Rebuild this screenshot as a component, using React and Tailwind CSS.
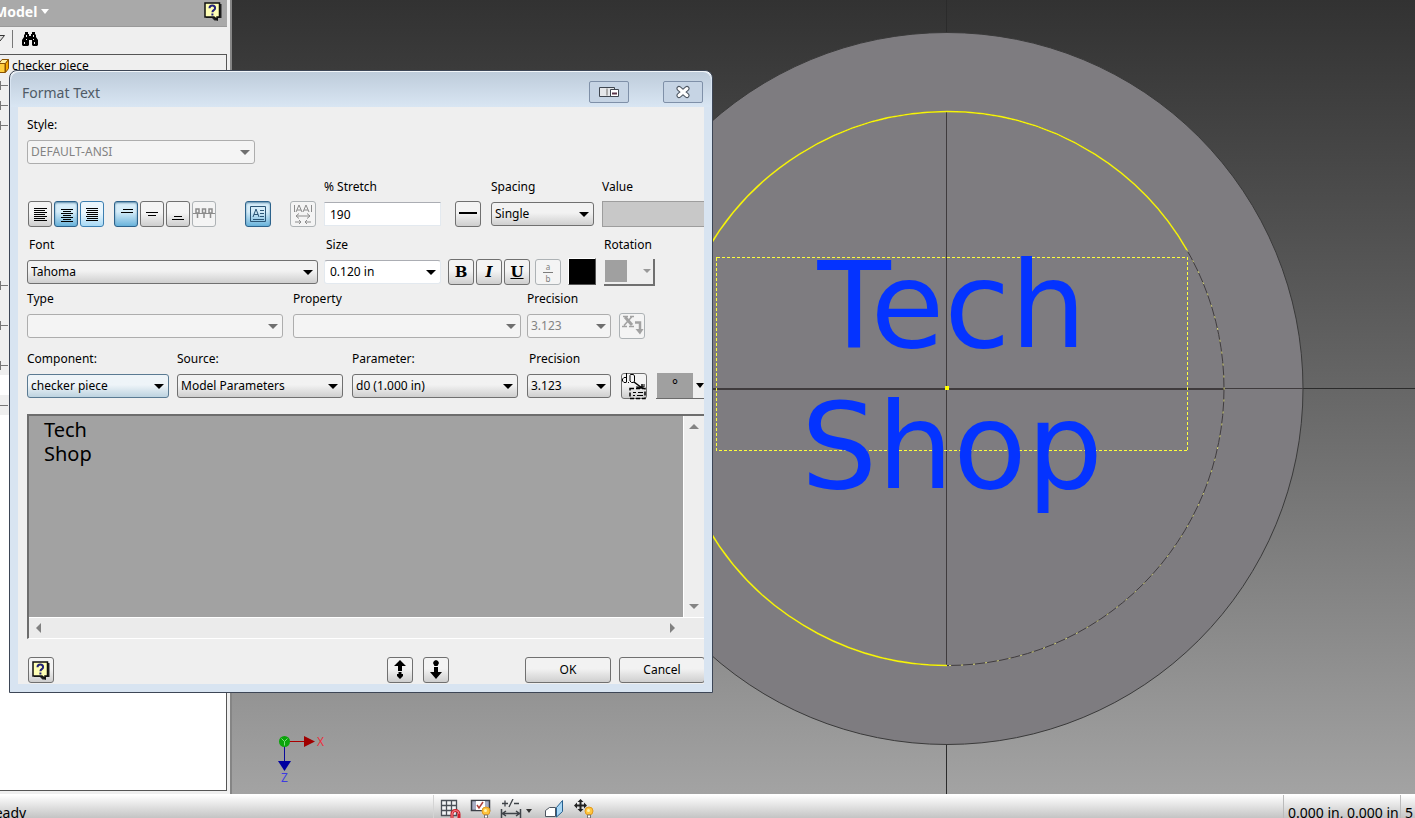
import { useState } from "react";

const UI_FONT = "font-['Noto_Sans',Tahoma,sans-serif]";

function Caret({ className = "text-black" }) {
  return (
    <svg className={className} width="10" height="5" viewBox="0 0 10 5" aria-hidden="true">
      <path d="M0 0h10L5 5z" fill="currentColor" />
    </svg>
  );
}

function HelpIcon() {
  return (
    <svg width="18" height="19" viewBox="0 0 18 19" aria-hidden="true">
      <path d="M2 2h15.500v14H14v2.500h-3.500L8 16H2z" fill="#222" />
      <path d="M1 1h14.500v14H13v2.500L10 15H1z" fill="#ffffb5" stroke="#111" strokeWidth="1.500" />
      <path d="M5.500 6.200c0-3.600 5.600-3.600 5.600 0 0 2-2.700 1.800-2.700 4M8.400 11.500v2" fill="none" stroke="#23237a" strokeWidth="2" />
    </svg>
  );
}

function Field({ id, label, inset, className = "", children }) {
  return (
    <div className={`flex flex-col gap-[5px] ${className}`}>
      <label htmlFor={id} className={`h-[18px] leading-[18px] whitespace-nowrap ${inset ? "pl-[2px]" : ""}`}>
        {label}
      </label>
      <div className="flex h-[26px] items-center">{children}</div>
    </div>
  );
}

const selectTones = {
  normal: "border-[#707070] bg-linear-to-b from-[#f2f2f2] from-45% to-[#cfcfcf] text-black",
  hot: "border-[#5a7a92] bg-linear-to-b from-[#eef4f8] from-45% to-[#bdd3e0] text-black",
  disabled: "border-[#adadad] bg-[#f4f4f4] text-[#838383]",
  plain: "border-[#e3e9ef] border-t-[#abadb3] bg-white text-black",
};

function Select({ id, tone = "normal", options }) {
  return (
    <div className="relative w-full">
      <select
        id={id}
        disabled={tone === "disabled"}
        className={`block h-6 w-full appearance-none rounded-[3px] border pr-5 leading-5 opacity-100 ${tone === "plain" ? "pl-[5px]" : "pl-[3px]"} ${selectTones[tone]}`}
      >
        {options.map((option) => (
          <option key={option}>{option}</option>
        ))}
      </select>
      <span className="pointer-events-none absolute inset-y-0 right-[5px] flex items-center">
        <Caret className={tone === "disabled" ? "text-[#6f6f6f]" : "text-black"} />
      </span>
    </div>
  );
}

const toolTones = {
  normal: "border-[#707070] bg-linear-to-b from-[#f4f4f4] from-45% to-[#cecece]",
  active: "border-[#2c628b] bg-linear-to-b from-[#d6edf9] from-40% to-[#68b3db] shadow-[inset_0_1px_2px_#5d8ba8]",
  hot: "border-[#3c7fb1] bg-linear-to-b from-[#eaf6fd] from-45% to-[#a7d9f5]",
  disabled: "border-[#adb2b5] bg-[#f4f4f4]",
};

function ToolButton({ label, tone = "normal", narrow, onClick, children }) {
  return (
    <button
      type="button"
      aria-label={label}
      disabled={tone === "disabled"}
      onClick={onClick}
      className={`flex h-[26px] shrink-0 items-center justify-center rounded-[3px] border ${narrow ? "w-6" : "w-[26px]"} ${toolTones[tone]}`}
    >
      {children}
    </button>
  );
}

function Strokes({ d, color = "#000", width = 1 }) {
  return (
    <svg width="22" height="24" viewBox="0 0 22 24" className="shrink-0" aria-hidden="true" shapeRendering="crispEdges">
      <path d={d} fill="none" stroke={color} strokeWidth={width} />
    </svg>
  );
}

const horizontal = [
  { label: "Left justify", d: "M5 6.500h13M5 8.500h11M5 10.500h13M5 12.500h11M5 14.500h13M5 16.500h11M5 18.500h13" },
  { label: "Center justify", d: "M6 7.500h12M8 9.500h8M6 11.500h12M8 13.500h8M6 15.500h12M8 17.500h8M6 19.500h12" },
  { label: "Right justify", d: "M5 6.500h12M6 8.500h11M5 10.500h12M6 12.500h11M5 14.500h12M6 16.500h11M5 18.500h12" },
];

const vertical = [
  { label: "Top justify", d: "M8 7.500h10M6 10.500h12" },
  { label: "Middle justify", d: "M5 10.500h12M7 13.500h8" },
  { label: "Bottom justify", d: "M7 14.500h8M5 17.500h12" },
];

function FormatBar() {
  const [align, setAlign] = useState(1);
  const [base, setBase] = useState(0);

  return (
    <div className="mt-[13px] flex items-end">
      <div className="ml-px flex gap-[2px]">
        {horizontal.map((item, i) => (
          <ToolButton key={item.label} narrow label={item.label} tone={align === i ? "active" : i === 2 ? "hot" : "normal"} onClick={() => setAlign(i)}>
            <Strokes d={item.d} />
          </ToolButton>
        ))}
      </div>
      <div className="ml-[10px] flex gap-[2px]">
        {vertical.map((item, i) => (
          <ToolButton key={item.label} narrow label={item.label} tone={base === i ? "active" : "normal"} onClick={() => setBase(i)}>
            <Strokes d={item.d} />
          </ToolButton>
        ))}
        <ToolButton narrow label="Baseline justify" tone="disabled">
          <svg width="22" height="24" viewBox="0 0 22 24" fill="none" stroke="#8c8c8c" aria-hidden="true">
            <path d="M0 11.500h22" />
            <path d="M3 7h3v4H3zM9.500 7h3v4h-3zM16 7h3v4h-3zM4.500 11v5M11 11v5M17.500 11v5" strokeWidth="1.500" />
          </svg>
        </ToolButton>
      </div>
      <div className="ml-[29px]">
        <ToolButton label="Single line text" tone="active">
          <svg width="18" height="18" viewBox="0 0 18 18" fill="none" stroke="#2b5575" aria-hidden="true">
            <path d="M1.500 1.500h15v15h-15zM4 12l3-8 3 8M5 9.500h4M11 5.500h4M11 8.500h4M11 11.500h4M4 14.500h11" />
          </svg>
        </ToolButton>
      </div>
      <div className="ml-[19px]">
        <ToolButton label="Fit text" tone="disabled">
          <svg width="24" height="24" viewBox="0 0 24 24" fill="none" stroke="#8c8c8c" aria-hidden="true">
            <path d="M3.500 3v7M20.500 3v7M5 10l3-7 3 7M6 8h4M12 10l3-7 3 7M13 8h4M5 14h14M8 11.500L5 14l3 2.500M16 11.500l3 2.500-3 2.500M4 20h6M8 18l2 2-2 2M20 20h-6M16 18l-2 2 2 2" />
          </svg>
        </ToolButton>
      </div>
      <Field id="stretch" label="% Stretch" className="ml-2 w-[117px]">
        <input id="stretch" defaultValue="190" className="h-6 w-full border border-[#e3e9ef] border-t-[#abadb3] bg-white pl-[5px]" />
      </Field>
      <div className="ml-[14px]">
        <ToolButton label="Line style">
          <Strokes d="M2 11h18" width={2} />
        </ToolButton>
      </div>
      <Field id="spacing" label="Spacing" className="ml-[10px] w-[103px]">
        <Select id="spacing" options={["Single", "Double", "Multiple"]} />
      </Field>
      <Field id="value" label="Value" className="ml-[8px] min-w-0 flex-1">
        <input id="value" disabled className="h-[26px] w-full border border-r-0 border-[#9d9d9d] bg-[#c8c8c8]" />
      </Field>
    </div>
  );
}

function FontBar() {
  const letter = "font-['DejaVu_Serif',serif] text-[15px] leading-5 font-bold";
  return (
    <div className="mt-[9px] flex items-end">
      <Field id="font" label="Font" inset className="w-[291px]">
        <Select id="font" options={["Tahoma", "Arial"]} />
      </Field>
      <Field id="size" label="Size" inset className="ml-[6px] w-[117px]">
        <Select id="size" tone="plain" options={["0.120 in", "0.240 in"]} />
      </Field>
      <div className="ml-[7px] flex gap-[2px]">
        <ToolButton label="Bold"><b className={letter}>B</b></ToolButton>
        <ToolButton label="Italic"><i className={letter}>I</i></ToolButton>
        <ToolButton label="Underline"><u className={letter}>U</u></ToolButton>
      </div>
      <div className="ml-[5px]">
        <ToolButton label="Stack" tone="disabled">
          <span className="flex flex-col text-[8px] leading-[11px] text-[#7c7c7c]">
            <span className="border-b border-[#7c7c7c] px-[3px]">a</span>
            <span className="px-[3px]">b</span>
          </span>
        </ToolButton>
      </div>
      <button type="button" aria-label="Text color" className="ml-[7px] h-[27px] w-7 border border-t-white border-r-[#555] border-b-[#555] border-l-white bg-black" />
      <Field id="rotation" label="Rotation" className="ml-[8px]">
        <button id="rotation" type="button" disabled className="flex h-[27px] w-[51px] items-center justify-between border-r-2 border-b-2 border-[#707070] bg-[#efefef] pr-[2px]">
          <span className="ml-px h-[22px] w-[22px] bg-[#a0a0a0]" />
          <svg width="8" height="4" viewBox="0 0 8 4" aria-hidden="true"><path d="M0 0h8L4 4z" fill="#999" /></svg>
        </button>
      </Field>
    </div>
  );
}

function PropertyBar() {
  return (
    <div className="mt-[5px] flex items-end">
      <Field id="type" label="Type" className="w-[256px]">
        <Select id="type" tone="disabled" options={[""]} />
      </Field>
      <Field id="property" label="Property" className="ml-[10px] w-[228px]">
        <Select id="property" tone="disabled" options={[""]} />
      </Field>
      <Field id="property-precision" label="Precision" className="ml-[6px] w-[84px]">
        <Select id="property-precision" tone="disabled" options={["3.123"]} />
      </Field>
      <div className="ml-2">
        <ToolButton label="Add property" tone="disabled">
          <svg width="24" height="24" viewBox="0 0 24 24" fill="none" stroke="#a2a2a2" aria-hidden="true">
            <path d="M5 3l7 8" strokeWidth="3" />
            <path d="M12 2.500l-8 9M3 2.500h5M10 2.500h4M2 12.500h5M9 12.500h5" strokeWidth="1.500" />
            <path d="M15 8.500h5V17" strokeWidth="2.500" />
            <path d="M15.500 15h8L20 20.500z" fill="#a2a2a2" stroke="none" />
          </svg>
        </ToolButton>
      </div>
    </div>
  );
}

function ParameterBar() {
  return (
    <div className="mt-[11px] flex items-end">
      <Field id="component" label="Component:" className="w-[142px]">
        <Select id="component" tone="hot" options={["checker piece"]} />
      </Field>
      <Field id="source" label="Source:" className="ml-2 w-[166px]">
        <Select id="source" options={["Model Parameters", "User Parameters"]} />
      </Field>
      <Field id="parameter" label="Parameter:" className="ml-[9px] w-[166px]">
        <Select id="parameter" options={["d0 (1.000 in)"]} />
      </Field>
      <Field id="precision" label="Precision" inset className="ml-[9px] w-[84px]">
        <Select id="precision" options={["3.123", "2.12"]} />
      </Field>
      <div className="ml-[10px]">
        <ToolButton label="Add parameter">
          <svg width="26" height="28" viewBox="0 0 26 28" className="shrink-0" fill="none" stroke="#000" aria-hidden="true">
            <path d="M5.500 1v9M5.500 5.500H3L1.500 7v2L3 10.500h2.500M9.500 2.500h3l1 1.500v5l-1 1.500h-2L9 9V3.500zM7 10.500h1" />
            <path d="M13 10l8 6M21 16h-5M21 16v-4" strokeWidth="1.500" />
            <path d="M15 15h8v-3" />
            <path d="M9 16.500h15v10H9z" strokeWidth="1.500" strokeDasharray="4 2" />
            <path d="M12 20.500h3M17 20.500h5M12 23.500h2M16 23.500h6" />
          </svg>
        </ToolButton>
      </div>
      <button type="button" aria-label="Insert symbol" className="ml-[9px] flex h-[27px] min-w-0 flex-1 items-center justify-between border-b border-[#6b6b6b] bg-[#efefef]">
        <span className="ml-px flex h-[25px] w-9 justify-center bg-[#a0a0a0] text-[14px] leading-6">°</span>
        <svg width="8" height="5" viewBox="0 0 8 5" aria-hidden="true"><path d="M0 0h8L4 5z" /></svg>
      </button>
    </div>
  );
}

function TextPane() {
  return (
    <div className="mt-[15px] border-t-2 border-b border-l-2 border-t-[#6d6d6d] border-b-white border-l-[#6d6d6d]">
      <div className="flex">
        <textarea
          aria-label="Text"
          defaultValue={"Tech\nShop"}
          className="block h-[201px] min-w-0 flex-1 resize-none overflow-hidden bg-[#a2a2a2] pt-[2px] pl-[15px] text-[20px] leading-6 outline-none"
        />
        <div className="flex w-[21px] flex-col items-center justify-between border-l border-white bg-[#eeeeee] py-2">
          <button type="button" aria-label="Scroll up" className="flex rotate-180"><Caret className="text-[#848484]" /></button>
          <button type="button" aria-label="Scroll down" className="flex"><Caret className="text-[#848484]" /></button>
        </div>
      </div>
      <div className="flex h-[21px] items-center justify-between border-t border-white bg-[#ebebeb] pr-[29px] pl-[7px]">
        <button type="button" aria-label="Scroll left">
          <svg width="5" height="10" viewBox="0 0 5 10"><path d="M5 0v10L0 5z" fill="#808080" /></svg>
        </button>
        <button type="button" aria-label="Scroll right">
          <svg width="5" height="10" viewBox="0 0 5 10"><path d="M0 0v10l5-5z" fill="#808080" /></svg>
        </button>
      </div>
    </div>
  );
}

function DialogFooter() {
  const push = "h-[26px] w-[86px] shrink-0 rounded-[3px] border border-[#707070] bg-linear-to-b from-[#f2f2f2] from-45% to-[#cfcfcf]";
  return (
    <div className="mt-[18px] flex justify-between pl-px">
      <ToolButton label="Help"><HelpIcon /></ToolButton>
      <div className="-mr-px flex">
        <ToolButton label="Zoom in">
          <svg width="12" height="20" viewBox="0 0 12 20"><path d="M6 0l6 6H8v5H4V6H0zM4.500 12h3v2H9v2l-3 3-3-3v-2h1.500z" /></svg>
        </ToolButton>
        <div className="mr-[76px] ml-[10px]">
          <ToolButton label="Zoom out">
            <svg width="12" height="20" viewBox="0 0 12 20"><path d="M4 1l2-1 2 1 1 2-1.500 3h-3L3 3zM4 7h4v5h4l-6 7-6-7h4z" /></svg>
          </ToolButton>
        </div>
        <button type="button" className={push}>OK</button>
        <button type="button" className={`ml-2 ${push}`}>Cancel</button>
      </div>
    </div>
  );
}

function FormatTextDialog() {
  const caption = "flex h-[22px] w-10 items-center justify-center rounded-[2px] border border-[#7f90a8] bg-[#c6d4e4]";
  return (
    <section
      role="dialog"
      aria-label="Format Text"
      className="absolute top-[70px] left-[9px] w-[704px] rounded-t-lg border border-[#3d4656] bg-[#d8e4f1] px-2 pb-2 shadow-[inset_0_1px_0_#fff]"
    >
      <header className="-mx-[7px] flex h-9 items-center rounded-t-lg bg-linear-to-b from-[#bdcbda] to-[#d9e6f3] pt-[6px] pr-2 pl-[10px] shadow-[inset_0_1px_0_#f2f6fa]">
        <h2 className="flex-1 pl-px text-[14px] text-[#4f5a66]">Format Text</h2>
        <button type="button" aria-label="Collapse" className={caption}>
          <svg width="22" height="14" viewBox="0 0 22 14" fill="none" stroke="#3f4650">
            <path d="M1.500 2.500h15v9h-15z" fill="#e5e7ea" />
            <path d="M8 3.500h2v7H8z" fill="#aaa" stroke="none" />
            <path d="M12.500 4.500h8v7h-8z" fill="#fff" />
            <path d="M14 8.500h5" stroke="#5a3448" strokeWidth="2" />
          </svg>
        </button>
        <button type="button" aria-label="Close" className={`ml-[34px] ${caption}`}>
          <svg width="16" height="14" viewBox="0 0 16 14" fill="none" strokeLinecap="round">
            <path d="M4 3.500l8 7M12 3.500l-8 7" stroke="#4c5560" strokeWidth="5" />
            <path d="M4 3.500l8 7M12 3.500l-8 7" stroke="#fff" strokeWidth="3" />
          </svg>
        </button>
      </header>
      <form className="overflow-hidden bg-[#efefef] pt-[9px] pb-px pl-[9px]" onSubmit={(e) => e.preventDefault()}>
        <Field id="style" label="Style:" className="w-[228px]">
          <Select id="style" tone="disabled" options={["DEFAULT-ANSI"]} />
        </Field>
        <FormatBar />
        <FontBar />
        <PropertyBar />
        <ParameterBar />
        <TextPane />
        <DialogFooter />
      </form>
    </section>
  );
}

function ModelPanel() {
  return (
    <aside className="flex w-[232px] shrink-0 flex-col overflow-hidden border-r-2 border-[#858585] bg-[#efefef]">
      <header className="mr-[3px] flex h-[27px] items-center justify-between border-b border-[#999] bg-[#a9a9a9] pr-[5px] pb-[3px]">
        <button type="button" className="-ml-[6px] flex items-center gap-1 text-[14px] font-bold text-white">
          Model
          <svg width="8" height="5" viewBox="0 0 8 5"><path d="M0 0h8L4 5z" fill="#fff" /></svg>
        </button>
        <button type="button" aria-label="Help"><HelpIcon /></button>
      </header>
      <div className="flex h-[27px] items-center pb-1">
        <button type="button" aria-label="Filter" className="w-3">
          <svg width="6" height="10" viewBox="0 0 6 10" fill="#ddd" stroke="#333"><path d="M0 1.500h4.500L0 7" /></svg>
        </button>
        <span className="h-[18px] border-l border-[#777]" />
        <button type="button" aria-label="Find" className="ml-[9px]">
          <svg width="16" height="14" viewBox="0 0 16 14">
            <path d="M3 0h3v2h1v2h2V2h1V0h3v2l1 1v2l2 3v5l-1 1h-4l-1-1V8H7v5l-1 1H1l-1-1V8l2-3V3l1-1z" />
            <path d="M2 10h1v2H2zM12 10h1v2h-1zM4 3h1v2H4zM11 3h1v2h-1zM4 7h1v1H4zM11 7h1v1h-1z" fill="#eee" />
          </svg>
        </button>
      </div>
      <div className="mr-[3px] mb-[3px] flex-1 border-t border-r border-b border-[#555] bg-white">
        <div className="flex h-[21px] items-center gap-[3px] bg-[#efefef]">
          <svg width="9" height="16" viewBox="0 0 9 16" stroke="#8a5200">
            <path d="M-1 5.500h6v9h-6z" fill="#ffcf3d" />
            <path d="M-1 5.500l3-4h6.500l-3 4z" fill="#fff0a0" />
            <path d="M5.500 5.500l3-4v9l-3 4z" fill="#f5a800" />
          </svg>
          <span>checker piece</span>
        </div>
        <svg className="block bg-[#efefef]" width="9" height="340" viewBox="0 0 9 340" stroke="#777" shapeRendering="crispEdges" aria-hidden="true">
          <path d="M0 299h9v20H0zM0 339h9v1H0z" fill="#fff" stroke="none" />
          <path d="M0 9.500h8M0 29.500h8M0 49.500h8M0 209.500h8M0 249.500h8M0 289.500h8M0 329.500h8" />
          <path d="M.5 5v9M.5 25v9M.5 45v9M.5 205v9M.5 245v9M.5 285v9" />
        </svg>
      </div>
    </aside>
  );
}

function Viewport() {
  return (
    <main className="min-w-0 flex-1 bg-linear-to-b from-[#323232] to-[#a3a3a3]">
      <svg className="block h-full w-full" viewBox="232 0 1183 794" preserveAspectRatio="xMidYMid slice" aria-label="Sketch view">
        <path d="M232 388.500H1415M946.500 0V794" stroke="#2b2b2b" shapeRendering="crispEdges" />
        <circle cx="947" cy="388.500" r="356" fill="#7e7c80" stroke="#3a3a3a" />
        <path d="M591 388.500H1303M946.500 112V665" stroke="#3f3b3d" shapeRendering="crispEdges" />
        <path d="M670 388.500H1224" stroke="#3f3b3d" strokeWidth="2" shapeRendering="crispEdges" />
        <circle cx="947" cy="388.500" r="277" fill="none" stroke="#403c3e" />
        <path d="M947 665.500A277 277 0 1 1 1187 250" fill="none" stroke="#f6f40c" strokeWidth="1.500" />
        <path d="M1187 250A277 277 0 0 1 947 665.500" fill="none" stroke="#e4e37a" strokeDasharray="2 10" />
        <path d="M716.500 257.500H1187.500V450.500H716.500z" fill="none" stroke="#ffff3c" strokeDasharray="3 2" shapeRendering="crispEdges" />
        <g className="font-['DejaVu_Sans',sans-serif] text-[120px]" fill="#0433ff" textAnchor="middle">
          <text x="952" y="347">Tech</text>
          <text x="952" y="488">Shop</text>
        </g>
        <path d="M945 386h4v4h-4z" fill="#ff0" />
        <path d="M284.500 742V762" stroke="#0a0a9a" />
        <path d="M285 741.500H305" stroke="#a00" />
        <path d="M304 736l11 5.500-11 5.500z" fill="#a00000" />
        <path d="M278 761h13l-6.500 10z" fill="#0000a0" />
        <circle cx="284.500" cy="741.500" r="5.500" fill="#0aa50a" />
        <path d="M281.500 738.500l3 3 3-3M284.500 741.500v4" stroke="#7be07b" fill="none" />
        <text x="317" y="746" fill="#e8303c" className="text-[12px]">X</text>
        <text x="281" y="782" fill="#3c3ce0" className="text-[12px]">Z</text>
      </svg>
    </main>
  );
}

function Bulb() {
  return (
    <g>
      <circle cx="15" cy="12" r="4" fill="#ffc53d" stroke="#e39a1c" />
      <circle cx="14.500" cy="11.500" r="1.500" fill="#fff3b0" />
      <path d="M13.500 16h3v3h-3z" fill="#fff" stroke="#777" />
    </g>
  );
}

function StatusBar() {
  return (
    <footer className="h-6 shrink-0 overflow-hidden border-t border-white bg-linear-to-b from-white to-[#c4c4c4] text-[14px]">
      <div className="flex h-[35px] items-center">
        <span className="-ml-[14px] w-[447px]">Ready</span>
        <div className="flex h-full flex-1 items-start gap-2 border-l border-[#d4d4d4] pt-1 pl-[6px]">
          <button type="button" aria-label="Snap to grid">
            <svg width="21" height="20" viewBox="0 0 21 20" fill="none" stroke="#4a5058">
              <path d="M1.500 1.500h15v15h-15zM6.500 1v16M11.500 1v16M1 6.500h16M1 11.500h16" fill="#f2f4f6" strokeWidth="1.300" />
              <path d="M12 19v-4a3.500 3.500 0 0 1 7 0v4" stroke="#d01f2c" strokeWidth="3" />
              <path d="M12 19v-4a3.500 3.500 0 0 1 7 0" stroke="#f08a90" strokeWidth="1" />
            </svg>
          </button>
          <button type="button" aria-label="Show constraints" className="ml-px">
            <svg width="22" height="20" viewBox="0 0 22 20" fill="none">
              <path d="M1.500 1.500h18v10h-18z" fill="#a9aec4" stroke="#3c4048" strokeWidth="1.500" />
              <path d="M6 2h9v9H6z" fill="#fff" />
              <path d="M7 6l2 3 4-6" stroke="#b0403a" strokeWidth="1.500" />
              <g transform="translate(1 0)"><Bulb /></g>
            </svg>
          </button>
          <button type="button" aria-label="Dimension display">
            <svg width="22" height="20" viewBox="0 0 22 20" fill="none" stroke="#3f4348">
              <path d="M2 4.500h6M5 1.500v6M9 8l4-8M14 4.500h5" strokeWidth="1.300" />
              <path d="M1.500 10v9M20.500 10v9M2 14.500h18M6 12l-3.500 2.500L6 17M16 12l3.500 2.500L16 17" strokeWidth="1.500" />
            </svg>
          </button>
          <button type="button" aria-label="More dimensions" className="-ml-1 pt-[10px]">
            <svg className="block" width="6" height="4" viewBox="0 0 6 4"><path d="M0 0h6L3 4z" fill="#333" /></svg>
          </button>
          <button type="button" aria-label="Slice graphics" className="ml-1">
            <svg width="20" height="20" viewBox="0 0 20 20" stroke="#4d5560">
              <path d="M1.500 11.500l4-3h6v9h-10z" fill="#fff" />
              <path d="M12.500 8.500l6-7v11l-6 5.500z" fill="#a9d7f5" stroke="#27608f" />
            </svg>
          </button>
          <button type="button" aria-label="Show degrees of freedom" className="ml-[2px]">
            <svg width="20" height="20" viewBox="0 0 20 20">
              <path d="M6.500 0l3 3H7.500v2.500H10V3.500l3 3-3 3V7.500H7.500V10h2l-3 3-3-3h2V7.500H3v2l-3-3 3-3v2h2.500V3h-2z" fill="#222" />
              <Bulb />
            </svg>
          </button>
        </div>
        <span className="flex h-full w-[117px] items-center border-l border-[#bbb] pl-1 whitespace-nowrap">0.000 in, 0.000 in</span>
        <span className="flex h-full w-[15px] items-center border-l border-[#bbb] pl-1">5</span>
      </div>
    </footer>
  );
}

export default function App() {
  return (
    <div className={`relative flex h-screen flex-col overflow-hidden text-[12px] text-black ${UI_FONT}`}>
      <div className="flex min-h-0 flex-1">
        <ModelPanel />
        <Viewport />
      </div>
      <StatusBar />
      <FormatTextDialog />
    </div>
  );
}
